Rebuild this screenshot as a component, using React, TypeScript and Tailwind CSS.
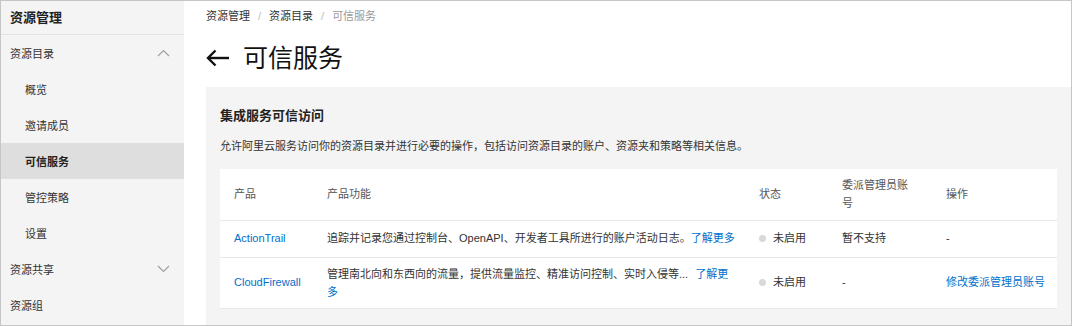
import React from "react";

const FONT = { fontFamily: "'Liberation Sans', 'Noto Sans CJK SC', sans-serif" };

function Chevron({ up }: { up?: boolean }) {
  return (
    <svg width="13" height="8" viewBox="0 0 13 8" className="mr-[14px]">
      <polyline
        points={up ? "1,7 6.5,1.5 12,7" : "1,1 6.5,6.5 12,1"}
        fill="none"
        stroke="#a0a0a0"
        strokeWidth="1.2"
      />
    </svg>
  );
}

function SideItem({ label, sub, active, chevron }: { label: string; sub?: boolean; active?: boolean; chevron?: "up" | "down" }) {
  return (
    <div
      className={`h-[36px] flex items-center justify-between text-[11px] ${sub ? "pl-[24px]" : "pl-[9px]"} ${
        active ? "bg-[#dedede] font-bold text-[#222]" : "text-[#333]"
      }`}
    >
      <span className="pt-[3px]">{label}</span>
      {chevron && <Chevron up={chevron === "up"} />}
    </div>
  );
}

function Status() {
  return (
    <span className="flex items-center">
      <span className="w-[7px] h-[7px] rounded-full bg-[#d9d9d9] mr-[7px]" />
      未启用
    </span>
  );
}

export default function App() {
  return (
    <div
      className="w-[1072px] h-[326px] border border-[#c6c6c6] flex overflow-hidden bg-white text-[#333]"
      style={FONT}
    >
      <aside className="w-[183px] shrink-0 bg-[#f4f4f4] flex flex-col">
        <div className="h-[34px] border-b border-[#e3e3e3] flex items-center pl-[9px] text-[13px] font-bold text-[#222]">
          资源管理
        </div>
        <SideItem label="资源目录" chevron="up" />
        <SideItem label="概览" sub />
        <SideItem label="邀请成员" sub />
        <SideItem label="可信服务" sub active />
        <SideItem label="管控策略" sub />
        <SideItem label="设置" sub />
        <SideItem label="资源共享" chevron="down" />
        <SideItem label="资源组" />
      </aside>
      <main className="flex-1 pl-[22px] flex flex-col min-w-0">
        <div className="h-[29px] flex items-center text-[11px] pt-[1px]">
          <span className="text-[#333]">资源管理</span>
          <span className="mx-[8px] text-[#bbb]">/</span>
          <span className="text-[#333]">资源目录</span>
          <span className="mx-[8px] text-[#bbb]">/</span>
          <span className="text-[#999]">可信服务</span>
        </div>
        <div className="h-[56px] flex items-center">
          <svg width="23" height="18" viewBox="0 0 23 18" className="mr-[14px]">
            <polyline points="9.5,1.5 2,9 9.5,16.5" fill="none" stroke="#111" strokeWidth="2.4" />
            <line x1="2" y1="9" x2="23" y2="9" stroke="#111" strokeWidth="2.4" />
          </svg>
          <span className="text-[25px] text-[#111] leading-none">可信服务</span>
        </div>
        <div className="flex-1 bg-[#f4f4f4] px-[14px] pt-[19px] mt-[1px]">
          <div className="h-[20px] flex items-center text-[13px] font-bold text-[#222]">集成服务可信访问</div>
          <div className="h-[20px] mt-[10px] flex items-center text-[11px] text-[#333]">
            允许阿里云服务访问你的资源目录并进行必要的操作，包括访问资源目录的账户、资源夹和策略等相关信息。
          </div>
          <table className="mt-[13px] w-full table-fixed bg-white text-[11px] border-collapse">
            <colgroup>
              <col className="w-[93px]" />
              <col className="w-[432px]" />
              <col className="w-[83px]" />
              <col className="w-[104px]" />
              <col />
            </colgroup>
            <thead>
              <tr className="h-[51px] border-b border-[#e8e8e8] text-[#555] text-left">
                <th className="font-normal px-[14px]">产品</th>
                <th className="font-normal px-[14px]">产品功能</th>
                <th className="font-normal px-[14px]">状态</th>
                <th className="font-normal px-[14px] leading-[18px]">委派管理员账号</th>
                <th className="font-normal px-[14px]">操作</th>
              </tr>
            </thead>
            <tbody>
              <tr className="h-[37px] border-b border-[#e8e8e8]">
                <td className="px-[14px] text-[#0070cc]">ActionTrail</td>
                <td className="pl-[14px] pr-[2px] text-[#333] whitespace-nowrap">
                  追踪并记录您通过控制台、OpenAPI、开发者工具所进行的账户活动日志。
                  <span className="text-[#0070cc]">了解更多</span>
                </td>
                <td className="px-[14px]">
                  <Status />
                </td>
                <td className="px-[14px]">暂不支持</td>
                <td className="px-[14px]">-</td>
              </tr>
              <tr className="h-[51px] border-b border-[#e8e8e8]">
                <td className="px-[14px] text-[#0070cc]">CloudFirewall</td>
                <td className="px-[14px] text-[#333] leading-[18px]">
                  管理南北向和东西向的流量，提供流量监控、精准访问控制、实时入侵等...
                  <span className="ml-[7px] text-[#0070cc]">了解更多</span>
                </td>
                <td className="px-[14px]">
                  <Status />
                </td>
                <td className="px-[14px]">-</td>
                <td className="pl-[14px] pr-[2px] text-[#0070cc] whitespace-nowrap">修改委派管理员账号</td>
              </tr>
            </tbody>
          </table>
        </div>
      </main>
    </div>
  );
}
